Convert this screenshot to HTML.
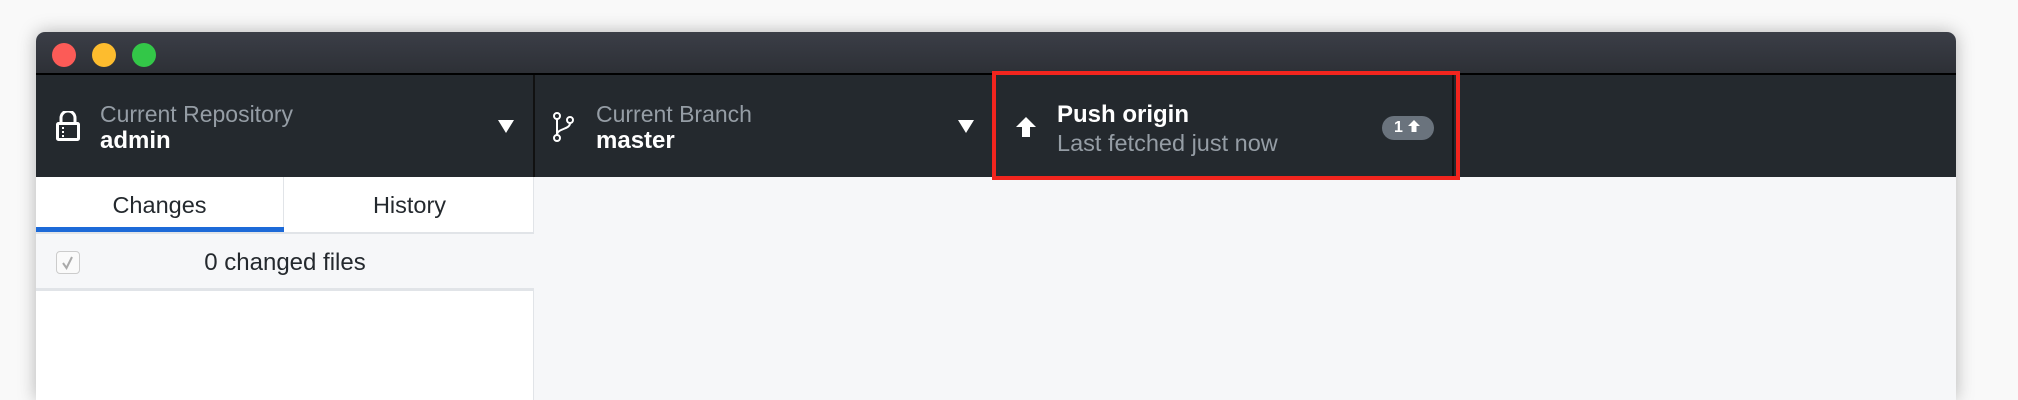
<!DOCTYPE html>
<html><head><meta charset="utf-8"><style>
*{margin:0;padding:0;box-sizing:border-box}
html,body{width:2018px;height:400px;overflow:hidden}
body{background:#f9f9f9;position:relative;font-family:"Liberation Sans",sans-serif}
.win{position:absolute;left:36px;top:32px;width:1920px;height:368px;border-radius:9px 9px 0 0;overflow:hidden;box-shadow:0 0 18px rgba(0,0,0,.28);background:#f6f7f9}
.title{position:absolute;left:0;top:0;width:100%;height:43px;background:linear-gradient(#3b3e47,#2d3036);border-bottom:2px solid #000}
.dot{position:absolute;top:11px;width:24px;height:24px;border-radius:50%}
.tb{position:absolute;left:0;top:43px;width:100%;height:102px;background:#24292e}
.abs{position:absolute}
.lbl{color:#959da5;font-size:23px;white-space:nowrap}
.val{color:#fff;font-size:24px;font-weight:bold;white-space:nowrap}
.side{position:absolute;left:0;top:145px;width:498px;height:223px;background:#fff;border-right:1px solid #e1e4e8}
.tab{text-align:center;font-size:23.5px;color:#24292e;line-height:56px}
</style></head><body>
<div class="win">
 <div class="title">
  <div class="dot" style="left:16px;background:#fc5b57"></div>
  <div class="dot" style="left:56px;background:#fdbc2e"></div>
  <div class="dot" style="left:96px;background:#33c748"></div>
 </div>
 <div class="tb">
  <svg class="abs" style="left:20px;top:36px" width="24" height="30" viewBox="0 0 24 30"><path d="M5 12V7a7 7 0 0 1 14 0v5" fill="none" stroke="#fff" stroke-width="3"/><rect x="1.5" y="12.5" width="21" height="16" rx="1" fill="none" stroke="#fff" stroke-width="3"/><rect x="6" y="16" width="2" height="2" fill="#fff"/><rect x="6" y="20" width="2" height="2" fill="#fff"/><rect x="6" y="24" width="2" height="2" fill="#fff"/></svg>
  <div class="abs lbl" style="left:64px;top:26px">Current Repository</div>
  <div class="abs val" style="left:64px;top:52px">admin</div>
  <svg class="abs" style="left:462px;top:45px" width="16" height="14"><path d="M0 0H16L8 13Z" fill="#fff"/></svg>
  <div class="abs" style="left:497px;top:0;width:2px;height:102px;background:#111"></div>
  <svg class="abs" style="left:517px;top:37px" width="22" height="30" viewBox="0 0 22 30"><circle cx="4" cy="4" r="3" fill="none" stroke="#fff" stroke-width="2"/><circle cx="4" cy="26" r="3" fill="none" stroke="#fff" stroke-width="2"/><circle cx="17" cy="8" r="3" fill="none" stroke="#fff" stroke-width="2"/><path d="M4 7V23M17 11c0 7-13 5-13 12" fill="none" stroke="#fff" stroke-width="2"/></svg>
  <div class="abs lbl" style="left:560px;top:26px">Current Branch</div>
  <div class="abs val" style="left:560px;top:52px">master</div>
  <svg class="abs" style="left:922px;top:45px" width="16" height="14"><path d="M0 0H16L8 13Z" fill="#fff"/></svg>
  <svg class="abs" style="left:980px;top:42px" width="20" height="20" viewBox="0 0 20 20"><path d="M10 0L20 10H14V20H6V10H0Z" fill="#fff"/></svg>
  <div class="abs val" style="left:1021px;top:26px">Push origin</div>
  <div class="abs lbl" style="left:1021px;top:55px;font-size:23.5px">Last fetched just now</div>
  <div class="abs" style="left:1346px;top:41px;width:52px;height:24px;border-radius:12px;background:#6a737d;color:#fff;font-size:16px;font-weight:bold;padding:3px 0 0 12px">1<svg style="margin-left:5px" width="12" height="12" viewBox="0 0 12 12"><path d="M6 0L12 6H8.5V12H3.5V6H0Z" fill="#fff"/></svg></div>
  <div class="abs" style="left:1416px;top:0;width:2px;height:102px;background:#111"></div>
 </div>
 <div class="abs" style="left:956px;top:39px;width:468px;height:109px;border:4px solid #f2251e"></div>
 <div class="side">
  <div class="abs tab" style="left:0;top:0;width:248px;height:55px;border-right:1px solid #e1e4e8">Changes</div>
  <div class="abs" style="left:0;top:50px;width:248px;height:5px;background:#1d6ad8"></div>
  <div class="abs tab" style="left:249px;top:0;width:249px;height:55px">History</div>
  <div class="abs" style="left:0;top:55px;width:498px;height:59px;background:#f6f7f9;border-top:2px solid #e1e4e8;border-bottom:3px solid #e1e4e8"></div>
  <div class="abs" style="left:20px;top:74px;width:24px;height:23px;border:1px solid #ccc;border-radius:4px;background:#fafafa"><svg width="22" height="21"><path d="M6 11L9.5 16L15 5" fill="none" stroke="#aaa" stroke-width="2"/></svg></div>
  <div class="abs" style="left:0;top:72px;width:498px;text-align:center;font-size:24px;color:#24292e">0 changed files</div>
 </div>
</div>
</body></html>
